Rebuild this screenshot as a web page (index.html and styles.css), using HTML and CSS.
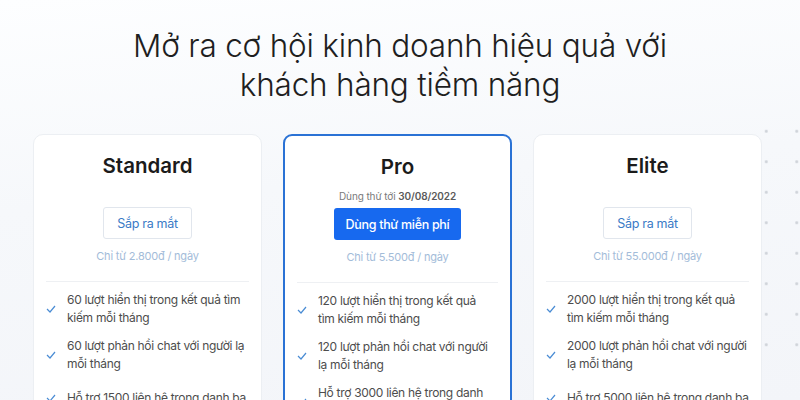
FILE: index.html
```html
<!DOCTYPE html>
<html lang="vi">
  <head>
    <meta charset="UTF-8" />
    <meta name="viewport" content="width=device-width, initial-scale=1.0" />
    <title>Bảng giá</title>
    <link rel="stylesheet" href="styles.css">
  </head>
  <body>
    <div class="dots"></div>
    <section class="pricing">
      <h1>Mở ra cơ hội kinh doanh hiệu quả với<br />khách hàng tiềm năng</h1>

      <div class="plans">
        <div class="plan">
          <h2>Standard</h2>
          <div class="trial"></div>
          <button class="btn btn-outline">Sắp ra mắt</button>
          <div class="price">Chỉ từ 2.800đ / ngày</div>
          <ul class="features">
            <li><svg class="check" viewBox="0 0 10 8"><polyline points="1,4 4,7 9,1" /></svg><span>60 lượt hiển thị trong kết quả tìm kiếm mỗi tháng</span></li>
            <li><svg class="check" viewBox="0 0 10 8"><polyline points="1,4 4,7 9,1" /></svg><span>60 lượt phản hồi chat với người lạ mỗi tháng</span></li>
            <li><svg class="check" viewBox="0 0 10 8"><polyline points="1,4 4,7 9,1" /></svg><span>Hỗ trợ 1500 liên hệ trong danh bạ</span></li>
            <li><svg class="check" viewBox="0 0 10 8"><polyline points="1,4 4,7 9,1" /></svg><span>Quản lý khách hàng cơ bản</span></li>
          </ul>
        </div>

        <div class="plan plan-featured">
          <h2>Pro</h2>
          <div class="trial">Dùng thử tới <b>30/08/2022</b></div>
          <button class="btn btn-primary">Dùng thử miễn phí</button>
          <div class="price">Chỉ từ 5.500đ / ngày</div>
          <ul class="features">
            <li><svg class="check" viewBox="0 0 10 8"><polyline points="1,4 4,7 9,1" /></svg><span>120 lượt hiển thị trong kết quả tìm kiếm mỗi tháng</span></li>
            <li><svg class="check" viewBox="0 0 10 8"><polyline points="1,4 4,7 9,1" /></svg><span>120 lượt phản hồi chat với người lạ mỗi tháng</span></li>
            <li><svg class="check" viewBox="0 0 10 8"><polyline points="1,4 4,7 9,1" /></svg><span>Hỗ trợ 3000 liên hệ trong danh bạ khách hàng</span></li>
            <li><svg class="check" viewBox="0 0 10 8"><polyline points="1,4 4,7 9,1" /></svg><span>Quản lý khách hàng nâng cao</span></li>
          </ul>
        </div>

        <div class="plan">
          <h2>Elite</h2>
          <div class="trial"></div>
          <button class="btn btn-outline">Sắp ra mắt</button>
          <div class="price">Chỉ từ 55.000đ / ngày</div>
          <ul class="features">
            <li><svg class="check" viewBox="0 0 10 8"><polyline points="1,4 4,7 9,1" /></svg><span>2000 lượt hiển thị trong kết quả tìm kiếm mỗi tháng</span></li>
            <li><svg class="check" viewBox="0 0 10 8"><polyline points="1,4 4,7 9,1" /></svg><span>2000 lượt phản hồi chat với người lạ mỗi tháng</span></li>
            <li><svg class="check" viewBox="0 0 10 8"><polyline points="1,4 4,7 9,1" /></svg><span>Hỗ trợ 5000 liên hệ trong danh bạ</span></li>
            <li><svg class="check" viewBox="0 0 10 8"><polyline points="1,4 4,7 9,1" /></svg><span>Quản lý khách hàng chuyên sâu</span></li>
          </ul>
        </div>
      </div>
    </section>
  </body>
</html>
```

FILE: styles.css
```css
body {
  margin: 0;
  font-family: Inter, "Noto Sans", sans-serif;
  color: #1e1e1e;
  background: linear-gradient(175deg, #fdfeff 0%, #f6f8fb 45%, #f3f5f9 100%);
  height: 400px;
  overflow: hidden;
}
.dots {
  position: absolute;
  left: 751px;
  top: 116px;
  width: 61px;
  height: 244px;
  background-image: radial-gradient(circle, #cfd3d9 1.2px, transparent 1.7px);
  background-size: 30.5px 30.5px;
}
.pricing {
  padding-top: 26px;
}
h1 {
  margin: 0;
  text-align: center;
  font-size: 31.5px;
  font-weight: 300;
  line-height: 39px;
  color: #1f1f1f;
  letter-spacing: -0.2px;
}
.plans {
  display: grid;
  grid-template-columns: repeat(3, 229px);
  gap: 21px;
  margin: 30px 0 0 33px;
  position: relative;
}
.plan {
  background-color: #fff;
  border: 1px solid #eceff3;
  border-radius: 10px;
  padding: 17px 12px 20px;
  display: flex;
  flex-direction: column;
  align-items: center;
  height: 400px;
}
.plan-featured {
  border: 2px solid #2a72d5;
  border-radius: 9px;
  padding: 17px 12px 20px;
}
.plan-featured .features {
  padding-right: 4px;
}
h2 {
  margin: 0;
  font-size: 20.5px;
  font-weight: 600;
  line-height: 28px;
  color: #1b1b1b;
}
.trial {
  margin-top: 7px;
  height: 16px;
  font-size: 10px;
  line-height: 16px;
  color: #7a7a7a;
  letter-spacing: -0.1px;
}
.trial b {
  color: #5a5a5a;
  font-weight: 600;
}
.btn {
  margin-top: 4px;
  height: 32px;
  padding: 0 13px;
  font-family: inherit;
  font-size: 12.5px;
  letter-spacing: -0.3px;
  border-radius: 3px;
  cursor: pointer;
}
.btn-outline {
  background-color: #fff;
  border: 1px solid #e1e6ed;
  color: #3a7ac6;
}
.btn-primary {
  background-color: #1769ef;
  border: none;
  color: #fff;
  font-weight: 500;
  padding: 0 12px;
}
.price {
  margin-top: 9px;
  font-size: 11px;
  line-height: 16px;
  letter-spacing: -0.2px;
  color: #a3bcd9;
}
.features {
  box-sizing: border-box;
  list-style: none;
  margin: 17px 0 0;
  padding: 9px 0 0;
  border-top: 1px solid #eef0f3;
  width: 100%;
  display: flex;
  flex-direction: column;
  gap: 10px;
}
.features li {
  display: flex;
  align-items: center;
  gap: 11px;
  min-height: 30px;
  font-size: 12px;
  line-height: 18px;
  letter-spacing: -0.3px;
  color: #4d4d4d;
}
.check {
  flex: none;
  width: 10px;
  height: 8px;
  fill: none;
  stroke: #4a8cd4;
  stroke-width: 1.2;
}
```
